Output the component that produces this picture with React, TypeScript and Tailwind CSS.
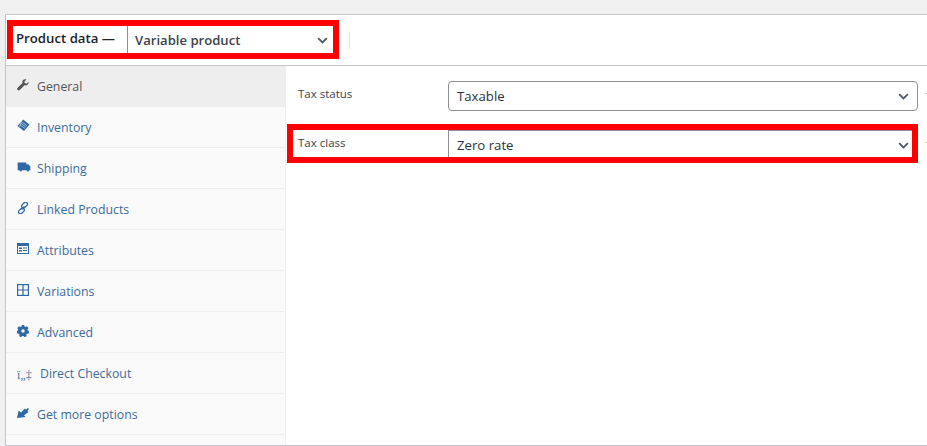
import React from "react";

const font = { fontFamily: '"Open Sans", "Noto Sans", sans-serif' };

function Chevron() {
  return (
    <svg viewBox="0 0 12 8" className="w-[11px] h-[7px] text-[#50575e]" fill="none" stroke="currentColor" strokeWidth="2">
      <path d="M1 1.2l5 5 5-5" />
    </svg>
  );
}

const WrenchIcon = () => (
  <svg viewBox="0 0 14 14" className="w-[12px] h-[12px] text-[#555]" fill="currentColor">
    <path d="M13.500 3.200L11 5.400 9 4.800 8.700 2.900 11 .6C9.600 0 8.100.3 7.100 1.300 6.200 2.300 6 3.600 6.400 4.800L.7 10.200C0 10.900 0 12 .7 12.800c.7.700 1.800.7 2.500 0L8.800 7.300c1.300.4 2.700.1 3.700-.9.9-.9 1.300-2.200 1-3.200z" />
  </svg>
);
const TagIcon = () => (
  <svg viewBox="0 0 14 14" className="w-[13px] h-[13px] text-[#2e69a6]" fill="currentColor">
    <path d="M6.500.5L13.500 5.800 7.500 13 .5 7.500z" />
    <path d="M5.500 3.200l5 3.800M4.500 4.800l5 3.800M3.500 6.400l5 3.800M4.800 2.200L2.800 8.500" stroke="#fafafa" strokeWidth=".6" fill="none" />
  </svg>
);
const TruckIcon = () => (
  <svg viewBox="0 0 14 11" className="w-[14px] h-[10px] text-[#2e69a6]" fill="currentColor">
    <path d="M0 .5h9.500v2h2.300L14 5v4h-1.300a1.400 1.400 0 0 1-2.800 0H4.800a1.400 1.400 0 0 1-2.800 0H0z" />
  </svg>
);
const LinkIcon = () => (
  <svg viewBox="0 0 12 12" className="w-[12px] h-[12px] text-[#2e69a6]" fill="none" stroke="currentColor" strokeWidth="1.300">
    <rect x="5.700" y="-.3" width="3.800" height="6.600" rx="1.900" transform="rotate(45 7.600 3)" />
    <rect x="2.500" y="5.700" width="3.800" height="6.600" rx="1.900" transform="rotate(45 4.400 9)" />
    <path d="M4.500 7.500L7.500 4.500" />
  </svg>
);
const AttributesIcon = () => (
  <svg viewBox="0 0 12 11" className="w-[12px] h-[11px] text-[#2e69a6]" fill="currentColor">
    <path fillRule="evenodd" d="M0 0h12v11H0zM1 3v7h10V3zM2 4.500h3v1.500H2zM6 4.500h4v1H6zM2 7h3v1.500H2zM6 7h4v1H6z" />
  </svg>
);
const GridIcon = () => (
  <svg viewBox="0 0 12 12" className="w-[12px] h-[12px] text-[#2e69a6]" fill="none" stroke="currentColor" strokeWidth="1.200">
    <rect x=".6" y=".6" width="10.800" height="10.800" />
    <path d="M6 .6v10.800M.6 6h10.800" />
  </svg>
);
const GearIcon = () => (
  <svg viewBox="0 0 12 12" className="w-[12px] h-[12px] text-[#2e69a6]" fill="currentColor">
    <path fillRule="evenodd" d="M4.800 0h2.400l.3 1.600 1 .5L10 1.200l1.500 1.900-1 1.300.3 1.100 1.400.8-.5 2.300-1.700.1-.7.9.4 1.600-2.200 1-1-1.300H5.300l-1 1.300-2.200-1 .4-1.600-.7-.9-1.700-.1-.5-2.300 1.400-.8.3-1.100-1-1.300L2 1.200l1.500.9 1-.5zM6 4.300a1.700 1.700 0 1 0 0 3.400 1.700 1.700 0 0 0 0-3.400z" />
  </svg>
);
const PluginIcon = () => (
  <svg viewBox="0 0 12 10" className="w-[12px] h-[10px] text-[#2e69a6]" fill="currentColor">
    <path d="M0 10L1.600 2.500 4 4.600 7.800.4 9 1.500 11 0l1 1-1.600 2 1 1.200L7 7.200l1.500 1.900z" />
  </svg>
);

const tabs = [
  { label: "General", icon: <WrenchIcon />, active: true },
  { label: "Inventory", icon: <TagIcon /> },
  { label: "Shipping", icon: <TruckIcon /> },
  { label: "Linked Products", icon: <LinkIcon /> },
  { label: "Attributes", icon: <AttributesIcon /> },
  { label: "Variations", icon: <GridIcon /> },
  { label: "Advanced", icon: <GearIcon /> },
  { label: "Direct Checkout", glyph: true },
  { label: "Get more options", icon: <PluginIcon /> },
];

function Field({ label, value, highlight }: { label: string; value: string; highlight?: boolean }) {
  return (
    <div className="relative flex h-[30px] pr-[9px] pl-[12px]">
      <div className="w-[150px] pt-[5px] text-[11.5px] leading-[16px] text-[#3c434a]">{label}</div>
      <div
        className={`flex flex-1 items-center justify-between bg-white pl-[8px] pr-[8px] text-[13.2px] text-[#2c3338] border border-[#8c8f94] ${
          highlight ? "" : "rounded-[4px]"
        }`}
      >
        <span className="pt-[2px]">{value}</span>
        <Chevron />
      </div>
      {highlight && <div className="absolute left-[1px] right-[9px] top-[-6px] bottom-[-3px] border-[6px] border-[#f00] pointer-events-none" />}
      <div className="absolute right-0 top-[12px] w-[2px] h-[1px] bg-[#e0c49c]" />
    </div>
  );
}

export default function App() {
  return (
    <div className="h-[446px] w-[927px] overflow-hidden bg-[#f0f0f1]" style={font}>
      <div className="pt-[14px] pl-[5px]">
        <div className="h-[432px] border-l border-t border-b border-[#c3c4c7] bg-white flex flex-col">
          {/* Header */}
          <div className="relative flex items-center h-[51px] shrink-0 border-b border-[#c3c4c7] pl-[10px]">
            <span className="w-[111px] text-[13.2px] font-semibold leading-none text-[#1d2327] pb-[3px]">Product data —</span>
            <div className="flex h-[28px] w-[206px] items-center justify-between border-l border-[#8c8f94] pl-[7px] pr-[5px] text-[13.1px] font-semibold text-[#3c434a]">
              <span className="pt-[2px]">Variable product</span>
              <Chevron />
            </div>
            <div className="ml-[16px] h-[17px] w-px bg-[#e4e4e6]" />
            <div className="absolute left-[1px] top-[5px] h-[39px] w-[332px] border-[6px] border-[#f00]" />
          </div>

          <div className="flex flex-1 min-h-0">
            {/* Tabs */}
            <div className="w-[280px] shrink-0 bg-[#fafafa] border-r border-[#eee]">
              {tabs.map((t) => (
                <div
                  key={t.label}
                  className={`flex h-[41px] items-center border-b border-[#eee] pl-[11px] text-[12.3px] ${
                    t.active ? "bg-[#eee] text-[#555]" : "text-[#3d6b9e]"
                  }`}
                >
                  {t.glyph ? (
                    <span className="w-[23px] pt-[4px] text-[12px] text-[#4a7098]" style={{ fontFamily: '"Liberation Serif", serif' }}>ï„‡</span>
                  ) : (
                    <span className="flex w-[20px] justify-start pb-[3px]">{t.icon}</span>
                  )}
                  <span className="pt-[2px]">{t.label}</span>
                </div>
              ))}
            </div>
            {/* Panel */}
            <div className="flex-1 pt-[15px] flex flex-col gap-[19px] bg-white">
              <Field label="Tax status" value="Taxable" />
              <Field label="Tax class" value="Zero rate" highlight />
            </div>
          </div>
        </div>
      </div>
    </div>
  );
}
